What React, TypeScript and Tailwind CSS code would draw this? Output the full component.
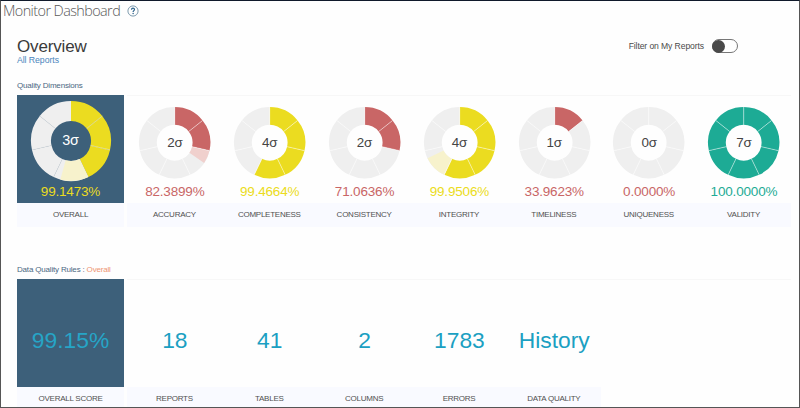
type Dimension = {
  name: string;
  sigma: number;
  fill: number;
  percent: string;
  color: string;
  pale: string;
};

const YELLOW = '#ebdc20';
const RED = '#c96666';
const GREEN = '#1dab95';

const overall: Dimension = { name: 'OVERALL', sigma: 3, fill: 3.8, percent: '99.1473%', color: YELLOW, pale: '#f7f2cc' };

const dimensions: Dimension[] = [
  { name: 'ACCURACY', sigma: 2, fill: 2.42, percent: '82.3899%', color: RED, pale: '#f0d0cd' },
  { name: 'COMPLETENESS', sigma: 4, fill: 4, percent: '99.4664%', color: YELLOW, pale: '#f7f2cc' },
  { name: 'CONSISTENCY', sigma: 2, fill: 2, percent: '71.0636%', color: RED, pale: '#f0d0cd' },
  { name: 'INTEGRITY', sigma: 4, fill: 4.75, percent: '99.9506%', color: YELLOW, pale: '#f7f2cc' },
  { name: 'TIMELINESS', sigma: 1, fill: 1, percent: '33.9623%', color: RED, pale: '#f0d0cd' },
  { name: 'UNIQUENESS', sigma: 0, fill: 0, percent: '0.0000%', color: RED, pale: '#f0d0cd' },
  { name: 'VALIDITY', sigma: 7, fill: 7, percent: '100.0000%', color: GREEN, pale: '#d0eee9' },
];

const stats = [
  { value: '18', name: 'REPORTS' },
  { value: '41', name: 'TABLES' },
  { value: '2', name: 'COLUMNS' },
  { value: '1783', name: 'ERRORS' },
  { value: 'History', name: 'DATA QUALITY' },
];

function point(turns: number, radius: number) {
  const a = (turns / 7) * Math.PI * 2;
  return `${(Math.sin(a) * radius).toFixed(3)} ${(-Math.cos(a) * radius).toFixed(3)}`;
}

function wedge(from: number, to: number, r: number) {
  const inner = r / 2;
  return `M${point(from, r)}A${r} ${r} 0 0 1 ${point(to, r)}L${point(to, inner)}A${inner} ${inner} 0 0 0 ${point(from, inner)}Z`;
}

function Ring({ item, radius, large = false }: { item: Dimension; radius: number; large?: boolean }) {
  const size = radius * 2 + 2;
  const segments = [0, 1, 2, 3, 4, 5, 6];
  return (
    <div className="relative">
      <svg width={size} height={size} viewBox={`${-size / 2} ${-size / 2} ${size} ${size}`} className="block">
        {segments.map((i) => (
          <path key={i} d={wedge(i, i + 1, radius)} fill={i < item.sigma ? item.color : '#efefef'} />
        ))}
        {item.fill > item.sigma && <path d={wedge(item.sigma, item.fill, radius)} fill={item.pale} />}
        {segments.map((i) => (
          <path
            key={i}
            d={`M${point(i, radius / 2)}L${point(i, radius)}`}
            stroke={large && i > item.sigma ? '#dde1e3' : '#ffffff'}
            strokeOpacity={large && (i === 0 || i === 3) ? 0 : 0.65}
            strokeWidth="0.7"
          />
        ))}
      </svg>
      <span
        className={
          large
            ? 'absolute inset-0 flex items-center justify-center text-[14.4px] tracking-[-0.2px] text-white'
            : 'absolute inset-0 flex items-center justify-center text-[13.4px] tracking-[-0.2px] text-[#444444]'
        }
      >
        {item.sigma}σ
      </span>
    </div>
  );
}

function Label({ children }: { children: string }) {
  return (
    <div className="flex h-6 items-center justify-center bg-[#f9faff] pb-px text-[8px] tracking-[-0.25px] whitespace-nowrap text-[#505050]">
      {children}
    </div>
  );
}

export default function App() {
  return (
    <div className="h-[408px] w-[800px] overflow-hidden border border-t-[#101a2b] border-r-[#555555] border-b-[#555555] border-l-[#555555] bg-[#fefefe] font-['Liberation_Sans',Arial,sans-serif]">
      <header className="flex h-[19px] items-center pl-[2px]">
        <h1 className="w-[118px] font-['Open_Sans',sans-serif] text-[14.4px] leading-[19px] font-light tracking-[-0.58px] whitespace-nowrap text-[#585858]">
          Monitor Dashboard
        </h1>
        <svg className="ml-[6px] mt-px" width="12" height="12" viewBox="0 0 12 12" fill="none">
          <circle cx="6" cy="6" r="5.1" stroke="#5d8199" strokeWidth="0.8" />
          <path d="M4.5 4.7C4.5 2.7 7.5 2.7 7.5 4.6C7.5 5.7 6.1 5.6 6.1 7" stroke="#2d638c" strokeWidth="1.2" />
          <circle cx="6.1" cy="8.6" r="0.75" fill="#2d638c" />
        </svg>
      </header>

      <div className="flex justify-between pt-[18px] pr-[61px] pl-4">
        <div>
          <h2 className="text-[17px] leading-[18px] tracking-[-0.15px] text-[#3a3a3a]">Overview</h2>
          <p className="text-[8.7px] leading-[9px] tracking-[-0.05px] text-[#4b86bd]">All Reports</p>
        </div>
        <div className="flex h-4 items-center gap-2">
          <span className="text-[8.6px] tracking-[-0.1px] text-[#4a4a4a]">Filter on My Reports</span>
          <span className="flex h-[14px] w-[26px] items-center rounded-full border border-[#777777] bg-white">
            <span className="-ml-px size-[13px] rounded-full bg-[#4a4a4a]" />
          </span>
        </div>
      </div>

      <section className="pt-[15px] pl-4">
        <h3 className="h-[15px] text-[8px] leading-[12px] tracking-[-0.18px] text-[#4c6882]">Quality Dimensions</h3>
        <div className="flex gap-[3px]">
          <div className="w-[107px]">
            <div className="flex h-[108px] flex-col items-center bg-[#3d607a] pt-[5px]">
              <Ring item={overall} radius={40} large />
              <span className="mt-[2px] text-[13.5px] leading-[15px] tracking-[-0.18px] text-[#ebdc20]">{overall.percent}</span>
            </div>
            <Label>{overall.name}</Label>
          </div>
          <div className="grid w-[664px] grid-cols-7">
            {dimensions.map((d) => (
              <div key={d.name}>
                <div className="flex h-[108px] flex-col items-center border-t border-[#f7f7f7] pt-[10px] pl-[0.8px]">
                  <Ring item={d} radius={35.7} />
                  <span className="mt-[4.6px] text-[13.5px] leading-[15px] tracking-[-0.18px]" style={{ color: d.color }}>
                    {d.percent}
                  </span>
                </div>
                <Label>{d.name}</Label>
              </div>
            ))}
          </div>
        </div>
      </section>

      <section className="pt-[37px] pl-4">
        <h3 className="h-[15px] text-[8px] leading-[12px] tracking-[-0.18px] text-[#4c6882]">
          Data Quality Rules : <span className="text-[#ee9673]">Overall</span>
        </h3>
        <div className="flex gap-[3px]">
          <div className="w-[107px]">
            <div className="flex h-[108px] items-center justify-center bg-[#3d607a] pt-[14px] text-[22.8px] text-[#26a5c7]">
              99.15%
            </div>
            <Label>OVERALL SCORE</Label>
          </div>
          <div className="grid w-[664px] grid-cols-7 border-t border-[#f7f7f7]">
            {stats.map((s) => (
              <div key={s.name}>
                <div className="flex h-[107px] items-center justify-center pt-[13px] pl-[0.8px] text-[22.8px] text-[#1ba0c2]">
                  {s.value}
                </div>
                <Label>{s.name}</Label>
              </div>
            ))}
          </div>
        </div>
      </section>
    </div>
  );
}
